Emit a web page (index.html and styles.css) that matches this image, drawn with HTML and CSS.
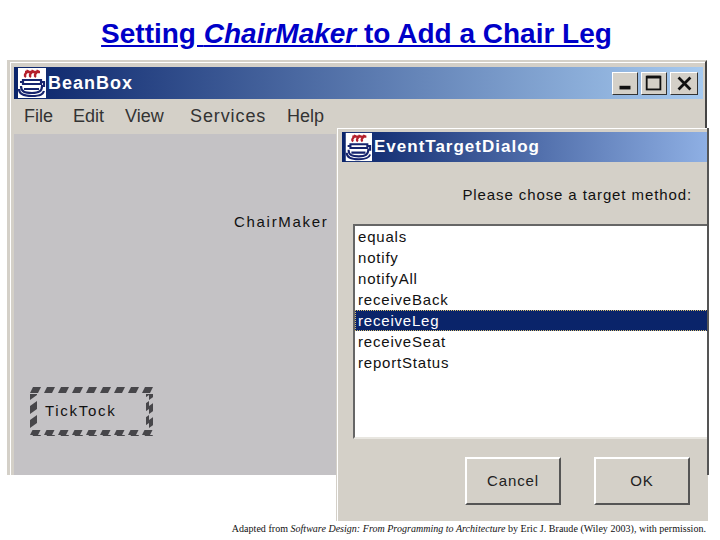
FILE: index.html
```html
<!DOCTYPE html>
<html lang="en">
<head>
    <meta charset="UTF-8">
    <title>Setting ChairMaker to Add a Chair Leg</title>
    <link rel="stylesheet" href="styles.css">
</head>
<body>
    <h1 class="slide-title"><span class="slide-title-text">Setting <em>ChairMaker</em> to Add a Chair Leg</span></h1>

    <div class="desktop">
        <div class="window main-window">
            <div class="titlebar">
                <svg class="java-icon" viewBox="0 0 32 32">
                    <rect x="4" y="1" width="28" height="30" fill="#fff"/>
                    <path d="M12 10c-3-2 1-4 2-7M17 10c-3-2 1-4 2-7M22 10c-3-2 1-4 2-7M11 5h15" fill="none" stroke="#b5202c" stroke-width="2.4"/>
                    <path d="M9 13h18v4H9zM6 15h3M27 15h3v4h-3M7 19c0 6 4 7 11 7s10-2 10-7M5 22c0 5 4 7 13 7s11-2 12-5M10 22h15" fill="none" stroke="#16246e" stroke-width="2.2"/>
                </svg>
                <span class="titlebar-text">BeanBox</span>
                <div class="window-controls">
                    <button class="control"><svg viewBox="0 0 26 23"><rect x="7" y="14" width="12" height="4" fill="#111"/></svg></button>
                    <button class="control"><svg viewBox="0 0 26 23"><rect x="5" y="4" width="15" height="14" fill="none" stroke="#111" stroke-width="2"/><rect x="5" y="3" width="15" height="3" fill="#111"/></svg></button>
                    <button class="control"><svg viewBox="0 0 26 23"><path d="M7 5l13 13M20 5L7 18" stroke="#111" stroke-width="3"/></svg></button>
                </div>
            </div>
            <div class="menubar">
                <span class="menu-item menu-file">File</span>
                <span class="menu-item menu-edit">Edit</span>
                <span class="menu-item menu-view">View</span>
                <span class="menu-item menu-services">Services</span>
                <span class="menu-item">Help</span>
            </div>
            <div class="canvas">
                <span class="bean-label chairmaker">ChairMaker</span>
                <div class="ticktock">
                    <svg class="hatch" viewBox="0 0 124 49">
                        <defs>
                            <pattern id="dash-h" width="14" height="6" patternUnits="userSpaceOnUse">
                                <path d="M0 6L3 0H11L8 6Z" fill="#47464a"/>
                            </pattern>
                            <pattern id="dash-v" width="7" height="14" patternUnits="userSpaceOnUse">
                                <path d="M0 13V5L7 0V8Z" fill="#47464a"/>
                            </pattern>
                        </defs>
                        <rect x="0" y="0" width="124" height="6" fill="url(#dash-h)"/>
                        <rect x="0" y="43" width="124" height="6" fill="url(#dash-h)"/>
                        <rect x="0" y="7" width="7" height="35" fill="url(#dash-v)"/>
                        <rect x="116" y="7" width="7" height="35" fill="url(#dash-v)"/>
                    </svg>
                    <span class="bean-label">TickTock</span>
                </div>
            </div>
        </div>

        <div class="window dialog">
            <div class="titlebar dialog-titlebar">
                <svg class="java-icon" viewBox="0 0 32 32">
                    <rect x="4" y="1" width="28" height="30" fill="#fff"/>
                    <path d="M12 10c-3-2 1-4 2-7M17 10c-3-2 1-4 2-7M22 10c-3-2 1-4 2-7M11 5h15" fill="none" stroke="#b5202c" stroke-width="2.4"/>
                    <path d="M9 13h18v4H9zM6 15h3M27 15h3v4h-3M7 19c0 6 4 7 11 7s10-2 10-7M5 22c0 5 4 7 13 7s11-2 12-5M10 22h15" fill="none" stroke="#16246e" stroke-width="2.2"/>
                </svg>
                <span class="titlebar-text">EventTargetDialog</span>
            </div>
            <p class="prompt">Please chose a target method:</p>
            <ul class="method-list">
                <li>equals</li>
                <li>notify</li>
                <li>notifyAll</li>
                <li>receiveBack</li>
                <li class="selected">receiveLeg</li>
                <li>receiveSeat</li>
                <li>reportStatus</li>
            </ul>
            <div class="dialog-buttons">
                <button class="push-button">Cancel</button>
                <button class="push-button">OK</button>
            </div>
        </div>
    </div>

    <footer class="credit">Adapted from <em>Software Design: From Programming to Architecture</em> by Eric J. Braude (Wiley 2003), with permission.</footer>
</body>
</html>
```

FILE: styles.css
```css
html, body {
    margin: 0;
    padding: 0;
    background-color: white;
}
body {
    width: 720px;
    height: 540px;
    overflow: hidden;
    font-family: "Liberation Sans", Arial, sans-serif;
}
.slide-title {
    margin: 0;
    height: 60px;
    padding: 18px 7px 0 0;
    box-sizing: border-box;
    text-align: center;
    font-size: 28px;
    line-height: 32px;
    font-weight: bold;
    color: #0000c8;
}
.slide-title-text {
    white-space: nowrap;
    text-decoration: underline;
}
.desktop {
    position: relative;
    height: 461px;
}

/* windows */
.window {
    position: absolute;
    box-sizing: border-box;
    background-color: #d4d0c8;
    border-style: solid;
    border-color: #d4d0c8;
    box-shadow: inset 1px 1px 0 #fff;
}
.main-window {
    left: 7px;
    top: 0;
    width: 700px;
    height: 415px;
    border-width: 2px 2px 0 3px;
    border-right-color: #444;
    padding: 5px 2px 0 4px;
}
.dialog {
    left: 336px;
    top: 68px;
    width: 372px;
    height: 393px;
    border-width: 0 0 0 1px;
    padding: 4px 0 0 5px;
}
.dialog::after {
    content: "";
    position: absolute;
    right: -1px;
    top: 0;
    width: 2px;
    height: 347px;
    background-color: #555;
}
.titlebar {
    display: flex;
    align-items: center;
    height: 32px;
    background: linear-gradient(to right, #0a246a, #a6caf0);
}
.dialog-titlebar {
    height: 30px;
    background: linear-gradient(to right, #0a246a, #8fb0e4);
}
.java-icon {
    width: 32px;
    height: 32px;
    flex-shrink: 0;
}
.dialog-titlebar .java-icon {
    width: 30px;
    height: 30px;
}
.titlebar-text {
    margin-left: 2px;
    font-size: 18px;
    font-weight: bold;
    letter-spacing: 1px;
    color: white;
}
.dialog-titlebar .titlebar-text {
    font-size: 17px;
}
.window-controls {
    display: flex;
    gap: 3px;
    margin-left: auto;
    margin-right: 5px;
}
.control {
    width: 26px;
    height: 23px;
    padding: 0;
    background-color: #d4d0c8;
    border: 1px solid;
    border-color: #fff #333 #333 #fff;
}
.control:last-child {
    width: 28px;
}
.control svg {
    display: block;
    width: 100%;
    height: 100%;
}

/* menu */
.menubar {
    display: flex;
    align-items: center;
    height: 35px;
    padding-left: 10px;
    font-size: 18px;
    color: #333;
}
.menu-file { width: 49px; }
.menu-edit { width: 52px; }
.menu-view { width: 65px; }
.menu-services { width: 97px; letter-spacing: 0.9px; }

/* bean canvas */
.canvas {
    position: relative;
    height: 341px;
    background-color: #c4c2c5;
}
.bean-label {
    font-size: 15px;
    letter-spacing: 1.7px;
    color: #111;
}
.chairmaker {
    position: absolute;
    left: 220px;
    top: 79px;
}
.ticktock {
    position: absolute;
    left: 16px;
    top: 253px;
    width: 124px;
    height: 49px;
    display: flex;
    align-items: center;
    padding: 0 0 2px 15px;
    box-sizing: border-box;
}
.hatch {
    position: absolute;
    left: 0;
    top: 0;
    width: 124px;
    height: 49px;
}

/* dialog contents */
.prompt {
    margin: 0;
    height: 62px;
    padding: 24px 16px 0 0;
    box-sizing: border-box;
    text-align: right;
    font-size: 15px;
    line-height: 18px;
    letter-spacing: 0.9px;
    color: #111;
}
.method-list {
    list-style: none;
    margin: 0 0 0 11px;
    padding: 0;
    height: 215px;
    box-sizing: border-box;
    background-color: white;
    border-top: 2px solid #666;
    border-left: 2px solid #666;
    border-bottom: 2px solid #e8e6e0;
    font-size: 15px;
    letter-spacing: 0.8px;
    color: #111;
}
.method-list li {
    height: 21px;
    line-height: 21px;
    padding-left: 3px;
}
.method-list .selected {
    background-color: #0a246a;
    color: white;
    outline: 1px dotted #d8c070;
    outline-offset: -1px;
}
.dialog-buttons {
    display: flex;
    gap: 33px;
    margin: 18px 0 0 123px;
}
.push-button {
    width: 96px;
    height: 48px;
    padding: 0 0 2px;
    background-color: #d4d0c8;
    border: 2px solid;
    border-color: #fff #555 #555 #fff;
    font-family: "Liberation Sans", Arial, sans-serif;
    font-size: 15px;
    letter-spacing: 0.9px;
    color: #222;
}

.credit {
    padding-top: 2px;
    padding-right: 14px;
    text-align: right;
    white-space: nowrap;
    font-family: "Liberation Serif", "Times New Roman", serif;
    font-size: 10px;
    line-height: 12px;
    letter-spacing: 0.025px;
    color: #111;
}
```
